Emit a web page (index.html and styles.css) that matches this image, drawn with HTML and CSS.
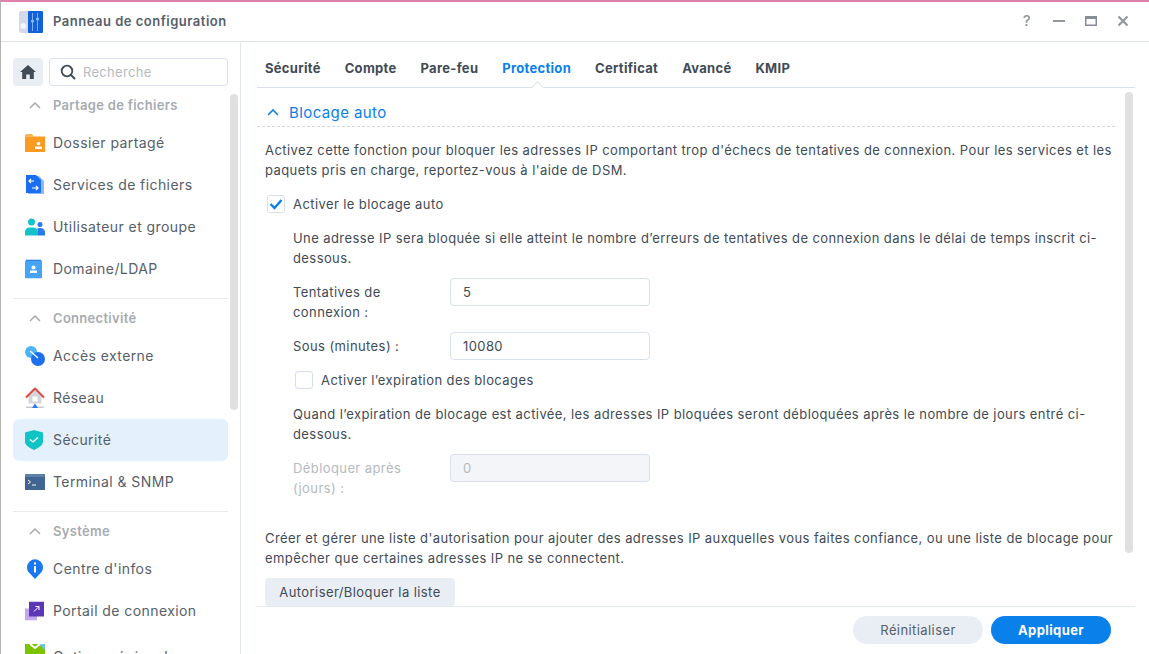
FILE: index.html
```html
<!DOCTYPE html>
<html lang="fr">
<head>
<meta charset="utf-8">
<title>Panneau de configuration</title>
<link rel="stylesheet" href="styles.css">
</head>
<body>
<div class="window">
  <header class="titlebar">
    <svg class="app-icon" width="24" height="22" viewBox="0 0 24 22"><rect x="0" y="0" width="10" height="22" rx="2" fill="#d5d9ea"/><rect x="9" y="0" width="15" height="22" rx="1" fill="#1261d8"/><rect x="13" y="2" width="1" height="18" fill="#7fb0f5"/><rect x="18" y="2" width="1" height="18" fill="#7fb0f5"/><circle cx="13.5" cy="10" r="1.6" fill="#8cc0ff"/><circle cx="18.5" cy="8" r="1.6" fill="#8cc0ff"/><circle cx="4.5" cy="15" r="3" fill="#f4f5fa"/></svg>
    <span class="app-title">Panneau de configuration</span>
    <div class="win-controls">
      <span class="help">?</span>
      <svg width="12" height="12" viewBox="0 0 12 12"><rect y="5" width="12" height="2" fill="#9097a0"/></svg>
      <svg width="12" height="12" viewBox="0 0 12 12"><path d="M0 1h12v10H0z M1.5 4v5.5h9V4z" fill="#868d97" fill-rule="evenodd"/></svg>
      <svg width="12" height="12" viewBox="0 0 12 12"><path d="M1.5 1.5l9 9M10.5 1.5l-9 9" stroke="#9097a0" stroke-width="2.2"/></svg>
    </div>
  </header>
  <div class="body">
    <aside class="sidebar">
      <div class="search-row">
        <button class="home"><svg width="16" height="14" viewBox="0 0 16 14"><path d="M8 0L0 7h2.2v7h4V9.5h3.6V14h4V7H16z" fill="#414b55"/></svg></button>
        <div class="search">
          <svg width="16" height="16" viewBox="0 0 16 16"><circle cx="7" cy="7" r="5.3" fill="none" stroke="#414b55" stroke-width="1.8"/><path d="M11 11l4 4" stroke="#414b55" stroke-width="2"/></svg>
          <span>Recherche</span>
        </div>
      </div>
      <nav class="nav">
        <div class="nav-head"><svg class="chev" width="12" height="7" viewBox="0 0 12 7"><path d="M1 6l5-5 5 5" fill="none" stroke="#a6abb1" stroke-width="1.5"/></svg>Partage de fichiers</div>
        <div class="nav-item"><svg width="20" height="18" viewBox="0 0 20 18"><path d="M0 1.500Q0 0 1.500 0H7l2 2.500H0z" fill="#fcb552"/><rect y="2.500" width="20" height="15.500" fill="#fd9a22"/><circle cx="13.500" cy="9.500" r="1.800" fill="#fff"/><rect x="10" y="12.500" width="7" height="2.500" fill="#fff"/></svg>Dossier partagé</div>
        <div class="nav-item"><svg width="20" height="20" viewBox="0 0 20 20"><path d="M3 1h11l5 5v13H3z" fill="#8ab8fb"/><path d="M1 0h10l5 5v12a1 1 0 0 1-1 1H1z" fill="#1a6ff0"/><path d="M9 6H4M6 4L4 6l2 2M7 13h6M11 11l2 2-2 2" fill="none" stroke="#fff" stroke-width="1.200"/></svg>Services de fichiers</div>
        <div class="nav-item"><svg width="20" height="18" viewBox="0 0 20 18"><circle cx="6.500" cy="4" r="3.500" fill="#14c3c9"/><path d="M0 17.500V14q0-4.500 5-4.500h3q5 0 5 4.500v3.500z" fill="#14c3c9"/><circle cx="15" cy="6.500" r="2.500" fill="#2a79ee"/><path d="M13 17.500V14q0-3 -1-3.500 1-.5 3-.5 5 0 5 4.500v3z" fill="#2a79ee"/></svg>Utilisateur et groupe</div>
        <div class="nav-item"><svg width="18" height="19" viewBox="0 0 18 19"><path d="M1 0h15v3H1z" fill="#1a62d8"/><rect y="1" width="17" height="18" rx="1" fill="#46a4f8"/><circle cx="8.500" cy="8" r="2" fill="#fff"/><rect x="5" y="11" width="7" height="2.500" fill="#fff"/></svg>Domaine/LDAP</div>
        <hr class="nav-sep">
        <div class="nav-head"><svg class="chev" width="12" height="7" viewBox="0 0 12 7"><path d="M1 6l5-5 5 5" fill="none" stroke="#a6abb1" stroke-width="1.5"/></svg>Connectivité</div>
        <div class="nav-item"><svg width="20" height="20" viewBox="0 0 20 20"><circle cx="6" cy="6" r="6" fill="#4fb2f5"/><circle cx="13" cy="13" r="7" fill="#1d6ff0"/><path d="M5 5l8 7" stroke="#fff" stroke-width="1.200"/></svg>Accès externe</div>
        <div class="nav-item"><svg width="20" height="21" viewBox="0 0 20 21"><path d="M10 1L2.500 9h1v7h13V9h1z" fill="#d4d6da"/><path d="M1 10l9-9 9 9" fill="none" stroke="#dd4a43" stroke-width="2"/><rect x="7.500" y="9" width="5" height="5" fill="#fff"/><rect x="1" y="19" width="18" height="1.500" fill="#c5c9ce"/><path d="M7 20.500h6L10 16z" fill="#2a79ee"/></svg>Réseau</div>
        <div class="nav-item active"><svg width="18" height="20" viewBox="0 0 18 20"><path d="M9 0l9 2.500V12q0 4-9 8-9-4-9-8V2.500z" fill="#10c4c4"/><path d="M5 9.500l3 2.500 5-4.500" fill="none" stroke="#fff" stroke-width="1.300"/></svg>Sécurité</div>
        <div class="nav-item"><svg width="20" height="16" viewBox="0 0 20 16"><rect width="20" height="16" fill="#3f6590"/><rect width="20" height="3" fill="#5d81a9"/><path d="M3 6l2.500 2L3 10M7 11h4" fill="none" stroke="#fff" stroke-width="1"/></svg>Terminal &amp; SNMP</div>
        <hr class="nav-sep">
        <div class="nav-head"><svg class="chev" width="12" height="7" viewBox="0 0 12 7"><path d="M1 6l5-5 5 5" fill="none" stroke="#a6abb1" stroke-width="1.5"/></svg>Système</div>
        <div class="nav-item"><svg width="20" height="20" viewBox="0 0 20 20"><path d="M10 20L3.500 13A8 8 0 1 1 16.500 13z" fill="#1877f2"/><rect x="9" y="7" width="2" height="6.500" fill="#fff"/><rect x="9" y="3.500" width="2" height="2" fill="#fff"/></svg>Centre d'infos</div>
        <div class="nav-item"><svg width="20" height="19" viewBox="0 0 20 19"><rect y="7" width="12" height="12" fill="#c3a6f0"/><rect x="4" y="0" width="15" height="15" fill="#5b37b5"/><path d="M9 10l5-5M10.500 5H14v3.500" fill="none" stroke="#fff" stroke-width="1"/></svg>Portail de connexion</div>
        <div class="nav-item last"><svg width="20" height="18" viewBox="0 0 20 18"><rect width="20" height="18" fill="#7cc400"/><path d="M14 0h6v6z" fill="#6cc4f5"/><path d="M5 0l5 4 5-4" fill="none" stroke="#fff" stroke-width="2"/></svg>Options régionales</div>
      </nav>
      <div class="scroll side-scroll"></div>
    </aside>
    <main class="main">
      <div class="tabs">
        <span class="tab">Sécurité</span>
        <span class="tab">Compte</span>
        <span class="tab">Pare-feu</span>
        <span class="tab on">Protection</span>
        <span class="tab">Certificat</span>
        <span class="tab">Avancé</span>
        <span class="tab">KMIP</span>
      </div>
      <div class="content">
        <div class="section-head"><svg width="12" height="7" viewBox="0 0 12 7"><path d="M1 6l5-5 5 5" fill="none" stroke="#0a80ea" stroke-width="1.600"/></svg>Blocage auto</div>
        <p class="para first">Activez cette fonction pour bloquer les adresses IP comportant trop d'échecs de tentatives de connexion. Pour les services et les paquets pris en charge, reportez-vous à l'aide de DSM.</p>
        <div class="check-row"><span class="box"><svg width="14" height="12" viewBox="0 0 14 12"><path d="M1.500 6l4 4 7-8" fill="none" stroke="#0a80ea" stroke-width="2.400"/></svg></span>Activer le blocage auto</div>
        <div class="indent">
          <p class="note">Une adresse IP sera bloquée si elle atteint le nombre d’erreurs de tentatives de connexion dans le délai de temps inscrit ci-dessous.</p>
          <div class="field"><label>Tentatives de connexion :</label><div class="input">5</div></div>
          <div class="field"><label>Sous (minutes) :</label><div class="input">10080</div></div>
          <div class="check-row sub"><span class="box"></span>Activer l’expiration des blocages</div>
          <p class="note">Quand l’expiration de blocage est activée, les adresses IP bloquées seront débloquées après le nombre de jours entré ci-dessous.</p>
          <div class="field disabled"><label>Débloquer après (jours) :</label><div class="input">0</div></div>
        </div>
        <p class="para p3">Créer et gérer une liste d'autorisation pour ajouter des adresses IP auxquelles vous faites confiance, ou une liste de blocage pour empêcher que certaines adresses IP ne se connectent.</p>
        <button class="list-btn">Autoriser/Bloquer la liste</button>
        <div class="scroll main-scroll"></div>
      </div>
      <footer class="footer">
        <button class="btn ghost">Réinitialiser</button>
        <button class="btn primary">Appliquer</button>
      </footer>
    </main>
  </div>
</div>
</body>
</html>
```
FILE: styles.css
```css
* { box-sizing: border-box; }
html, body { margin: 0; height: 100%; overflow: hidden; background: #fff; }
body { font-family: Inter, "Noto Sans", sans-serif; font-size: 13px; letter-spacing: 0.41px; color: #414b55; }
.window { height: 654px; width: 1149px; display: flex; flex-direction: column; border-top: 2px solid #e080ac; border-left: 1px solid #b4b4b4; background: #fff; }
.titlebar { height: 40px; flex: none; display: flex; align-items: center; border-bottom: 1px solid #dfe4ea; padding: 0 0 2px 18px; }
.app-icon { margin-top: 2px; }
.app-title { margin-left: 10px; font-weight: 600; font-size: 13px; letter-spacing: 0.5px; color: #56606a; }
.win-controls { margin-left: auto; display: flex; align-items: center; gap: 20px; padding-right: 20px; }
.help { color: #9097a0; font-size: 15px; width: 12px; text-align: center; font-weight: 500; }
.body { flex: 1; display: flex; min-height: 0; }
.sidebar { width: 240px; flex: none; border-right: 1px solid #e3e8ef; position: relative; overflow: hidden; display: flex; flex-direction: column; }
.search-row { display: flex; gap: 6px; padding: 16px 12px 0 12px; flex: none; }
.home { width: 30px; height: 28px; border: 0; border-radius: 4px; background: #e9edf4; padding: 0; display: flex; align-items: center; justify-content: center; }
.search { width: 179px; height: 28px; border: 1px solid #d9e1ec; border-radius: 4px; display: flex; align-items: center; gap: 7px; padding-left: 10px; color: #b5bac0; letter-spacing: 0.3px; }
.nav { padding-left: 12px; width: 227px; }
.nav-head { height: 36px; display: flex; align-items: center; font-weight: 600; color: #a6abb1; padding: 2px 0 0 16px; letter-spacing: 0.3px; }
.chev { margin-right: 12px; }
.nav-item { height: 42px; display: flex; align-items: center; font-size: 14px; letter-spacing: 0.42px; color: #56606a; position: relative; padding-left: 40px; border-radius: 6px; padding-bottom: 2px; }
.nav-item svg { position: absolute; left: 12px; top: 50%; transform: translateY(-50%); }
.nav-item.active { background: #e4f0fc; }
.nav-item.last { padding: 7px 0 0 40px; }
.nav-sep { margin: 8px 0 0; height: 1px; border: 0; background: #e6eaf0; }
.scroll { position: absolute; width: 8px; border-radius: 4px; background: #e0e0e0; }
.side-scroll { left: 229px; top: 52px; height: 316px; }
.main { flex: 1; min-width: 0; display: flex; flex-direction: column; padding-left: 16px; }
.tabs { height: 46px; flex: none; margin-right: 14px; border-bottom: 1px solid #dbe1e8; display: flex; gap: 24px; padding: 16px 0 0 8px; font-weight: 700; line-height: 20px; letter-spacing: 0.3px; }
.tab { color: #414b55; }
.tab.on { color: #0a80ea; position: relative; }
.tab.on::after { content: ""; position: absolute; left: 50%; bottom: -5px; width: 8px; height: 8px; margin-left: -4px; background: #fff; border-left: 1px solid #dbe1e8; border-top: 1px solid #dbe1e8; transform: rotate(45deg); }
.content { flex: 1; min-height: 0; overflow: hidden; position: relative; padding-right: 20px; margin-right: 14px; }
.section-head { height: 39px; border-bottom: 1px dashed #d5dae0; display: flex; align-items: center; gap: 10px; padding: 10px 0 0 10px; font-size: 15px; letter-spacing: 0.4px; color: #0a80ea; }
.para { margin: 0; padding-left: 8px; line-height: 20px; width: 858px; }
.para.first { margin-top: 13px; }
.check-row { height: 20px; display: flex; align-items: center; margin-top: 14px; padding-left: 10px; gap: 8px; }
.box { width: 18px; height: 18px; border: 1px solid #d5deea; border-radius: 3px; display: flex; align-items: center; justify-content: center; flex: none; }
.indent { padding-left: 36px; width: 858px; }
.note { margin: 14px 0 0; line-height: 20px; }
.field { display: flex; align-items: flex-start; margin-top: 10px; }
.field label { width: 157px; line-height: 20px; padding: 4px 30px 0 0; }
.input { width: 200px; height: 28px; border: 1px solid #d9e1ec; border-radius: 4px; padding-left: 12px; line-height: 26px; }
.check-row.sub { padding-left: 2px; margin-top: 10px; }
.disabled { color: #b5bac0; }
.disabled .input { background: #f3f5f9; }
.p3 { margin-top: 30px; }
.list-btn { display: block; margin: 10px 0 0 8px; width: 190px; height: 28px; border: 0; border-radius: 4px; background: #e9edf4; font: inherit; letter-spacing: inherit; color: #414b55; padding: 0; }
.main-scroll { right: 2px; top: 4px; height: 461px; }
.footer { height: 48px; flex: none; margin-right: 14px; border-top: 1px solid #e3e8ef; display: flex; justify-content: flex-end; gap: 8px; padding: 9px 24px 0 0; }
.btn { height: 28px; border: 0; border-radius: 14px; font: inherit; letter-spacing: inherit; padding: 0; }
.ghost { width: 130px; background: #e9edf4; color: #56606a; }
.primary { width: 120px; background: #0a80ea; color: #fff; font-weight: 700; }
```
